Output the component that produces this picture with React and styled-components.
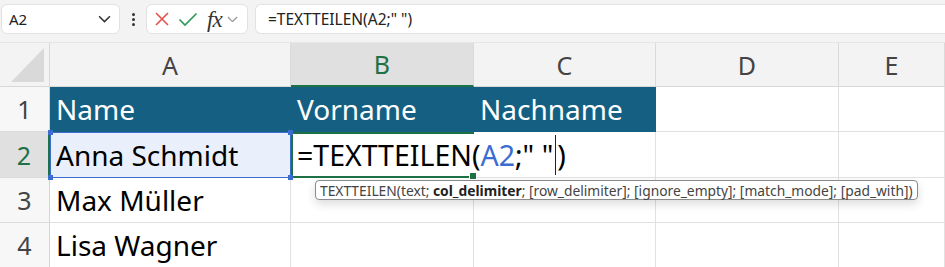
import styled, { createGlobalStyle } from "styled-components";

const TEAL = "#156082";
const GREEN = "#1e7145";
const BLUE = "#3b6dd1";
const GRID = "#e1e1e1";

const GlobalStyle = createGlobalStyle`
  html, body {
    margin: 0;
    background: #fff;
    overflow: hidden;
  }
  body {
    width: 945px;
    height: 267px;
    font-family: "Noto Sans", "Open Sans", sans-serif;
  }
`;

const Toolbar = styled.div`
  display: flex;
  align-items: flex-start;
  height: 43px;
  box-sizing: border-box;
  padding: 4px 0 0 1px;
  background: #f3f3f3;
  border-bottom: 1px solid #e6e6e6;
`;

const Box = styled.div`
  display: flex;
  align-items: center;
  height: 30px;
  box-sizing: border-box;
  background: #fff;
  border: 1px solid #e2e2e2;
  border-radius: 6px;
`;

const NameBox = styled(Box)`
  width: 119px;
  justify-content: space-between;
  padding: 0 8px 0 7px;
  font-size: 15px;
  color: #222;
`;

const Dots = styled.div`
  width: 26px;
  height: 30px;
  display: flex;
  flex-direction: column;
  align-items: center;
  justify-content: center;
  gap: 2px;
  span {
    width: 3px;
    height: 3px;
    border-radius: 50%;
    background: #333;
  }
`;

const FxBox = styled(Box)`
  width: 102px;
  padding-left: 7px;
  gap: 8px;
`;

const Fx = styled.span`
  font-family: "Liberation Serif", "DejaVu Serif", serif;
  font-style: italic;
  font-size: 23px;
  line-height: 1;
  color: #333;
  margin-left: 1px;
  margin-right: -3px;
  letter-spacing: -1px;
`;

const FormulaInput = styled(Box)`
  flex: 1;
  margin-left: 7px;
  border-radius: 6px 0 0 6px;
  border-right: none;
  padding-left: 12px;
  font-size: 15.5px;
  color: #222;
  white-space: pre;
`;

const Sheet = styled.div`
  display: grid;
  grid-template-columns: 50px 241px 183px 182px 183px 106px;
  grid-template-rows: 44px 45px 46px 45px 45px;
`;

const Corner = styled.div`
  background: #f3f3f3;
  border-right: 1px solid #d8d8d8;
  border-bottom: 1px solid #d8d8d8;
  position: relative;
  &::after {
    content: "";
    position: absolute;
    right: 5px;
    bottom: 4px;
    width: 33px;
    height: 34px;
    background: #d9d9d9;
    clip-path: polygon(100% 0, 100% 100%, 0 100%);
  }
`;

const ColHead = styled.div`
  display: flex;
  align-items: center;
  justify-content: center;
  box-sizing: border-box;
  font-size: 25px;
  background: ${(p) => (p.$active ? "#e0e0e0" : "#f3f3f3")};
  color: ${(p) => (p.$active ? GREEN : "#444")};
  border-right: 1px solid #dadada;
  border-bottom: ${(p) => (p.$active ? `2px solid ${GREEN}` : "1px solid #d8d8d8")};
`;

const RowHead = styled.div`
  display: flex;
  align-items: center;
  justify-content: center;
  box-sizing: border-box;
  font-size: 25px;
  background: ${(p) => (p.$active ? "#e0e0e0" : "#f7f7f7")};
  color: ${(p) => (p.$active ? GREEN : "#444")};
  border-right: ${(p) => (p.$active ? `2px solid ${GREEN}` : "1px solid #d4d4d4")};
  border-bottom: 1px solid #dcdcdc;
`;

const Cell = styled.div`
  position: relative;
  display: flex;
  align-items: center;
  box-sizing: border-box;
  padding-left: 6px;
  font-size: 28px;
  white-space: nowrap;
  color: ${(p) => (p.$head ? "#fff" : "#000")};
  background: ${(p) => (p.$head ? TEAL : p.$ref ? "#eaf0fb" : "#fff")};
  border-right: 1px solid ${(p) => (p.$head ? TEAL : GRID)};
  border-bottom: 1px solid ${(p) => (p.$head ? TEAL : GRID)};
`;

const RefCell = styled(Cell)`
  border: 1px solid ${BLUE};
  padding-left: 5px;
`;

const Handle = styled.span`
  position: absolute;
  width: 5px;
  height: 5px;
  background: ${(p) => p.$color};
  ${(p) => (p.$top ? "top: -3px;" : "bottom: -3px;")}
  ${(p) => (p.$left ? "left: -3px;" : "right: -3px;")}
  z-index: 3;
`;

const EditCell = styled(Cell)`
  z-index: 2;
  overflow: visible;
  padding-left: 4px;
  font-size: 28.5px;
  background: transparent;
  border: 2px solid ${GREEN};
  border-right: none;
  & > * {
    flex-shrink: 0;
  }
`;

const FillHandle = styled.span`
  position: absolute;
  right: -3px;
  bottom: -4px;
  width: 6px;
  height: 6px;
  background: ${GREEN};
  border: 1px solid #fff;
  z-index: 3;
`;

const RefText = styled.span`
  color: ${BLUE};
`;

const Caret = styled.span`
  display: inline-block;
  flex-shrink: 0;
  width: 1px;
  height: 40px;
  margin: 0 1px 0 2px;
  background: #222;
  align-self: center;
`;

const Tooltip = styled.div`
  position: absolute;
  left: 22px;
  top: 46px;
  height: 20px;
  box-sizing: border-box;
  padding: 0 4px 0 4px;
  display: flex;
  align-items: center;
  background: #fff;
  border: 1px solid #8a8a8a;
  border-radius: 4px;
  box-shadow: 0 4px 10px rgba(0, 0, 0, 0.14);
  font-size: 13.8px;
  color: #444;
  white-space: pre;
  b {
    color: #222;
    font-weight: 700;
  }
`;

function XIcon() {
  return (
    <svg width="16" height="16" viewBox="0 0 16 16">
      <path d="M2 2 L14 14 M14 2 L2 14" stroke="#e5504a" strokeWidth="1.6" fill="none" />
    </svg>
  );
}

function CheckIcon() {
  return (
    <svg width="20" height="16" viewBox="0 0 20 16">
      <path d="M1.5 8.5 L7 14 L18.5 2.5" stroke="#2f9a5c" strokeWidth="1.7" fill="none" />
    </svg>
  );
}

function Chevron({ color = "#333", size = 12 }) {
  return (
    <svg width={size} height={size * 0.6} viewBox="0 0 12 7">
      <path d="M1 1 L6 6 L11 1" stroke={color} strokeWidth="1.4" fill="none" />
    </svg>
  );
}

const cols = ["A", "B", "C", "D", "E"];

export default function App() {
  return (
    <>
      <GlobalStyle />
      <Toolbar>
        <NameBox>
          <span>A2</span>
          <Chevron color="#333" size={13} />
        </NameBox>
        <Dots>
          <span />
          <span />
          <span />
        </Dots>
        <FxBox>
          <XIcon />
          <CheckIcon />
          <Fx>fx</Fx>
          <Chevron color="#9a9a9a" size={11} />
        </FxBox>
        <FormulaInput>=TEXTTEILEN(A2;" ")</FormulaInput>
      </Toolbar>

      <Sheet>
        <Corner />
        {cols.map((c) => (
          <ColHead key={c} $active={c === "B"}>
            {c}
          </ColHead>
        ))}

        <RowHead>1</RowHead>
        <Cell $head>Name</Cell>
        <Cell $head>Vorname</Cell>
        <Cell $head>Nachname</Cell>
        <Cell />
        <Cell />

        <RowHead $active>2</RowHead>
        <RefCell $ref>
          Anna Schmidt
          <Handle $color={BLUE} $top $left />
          <Handle $color={BLUE} $top />
          <Handle $color={BLUE} $left />
          <Handle $color={BLUE} />
        </RefCell>
        <EditCell>
          <span>=TEXTTEILEN(</span>
          <RefText>A2</RefText>
          <span>;" "</span>
          <Caret />
          <span>)</span>
          <FillHandle />
          <Tooltip>
            TEXTTEILEN(text; <b>col_delimiter</b>; [row_delimiter]; [ignore_empty]; [match_mode]; [pad_with])
          </Tooltip>
        </EditCell>
        <Cell />
        <Cell />
        <Cell />

        <RowHead>3</RowHead>
        <Cell>Max Müller</Cell>
        <Cell />
        <Cell />
        <Cell />
        <Cell />

        <RowHead>4</RowHead>
        <Cell>Lisa Wagner</Cell>
        <Cell />
        <Cell />
        <Cell />
        <Cell />
      </Sheet>
    </>
  );
}
